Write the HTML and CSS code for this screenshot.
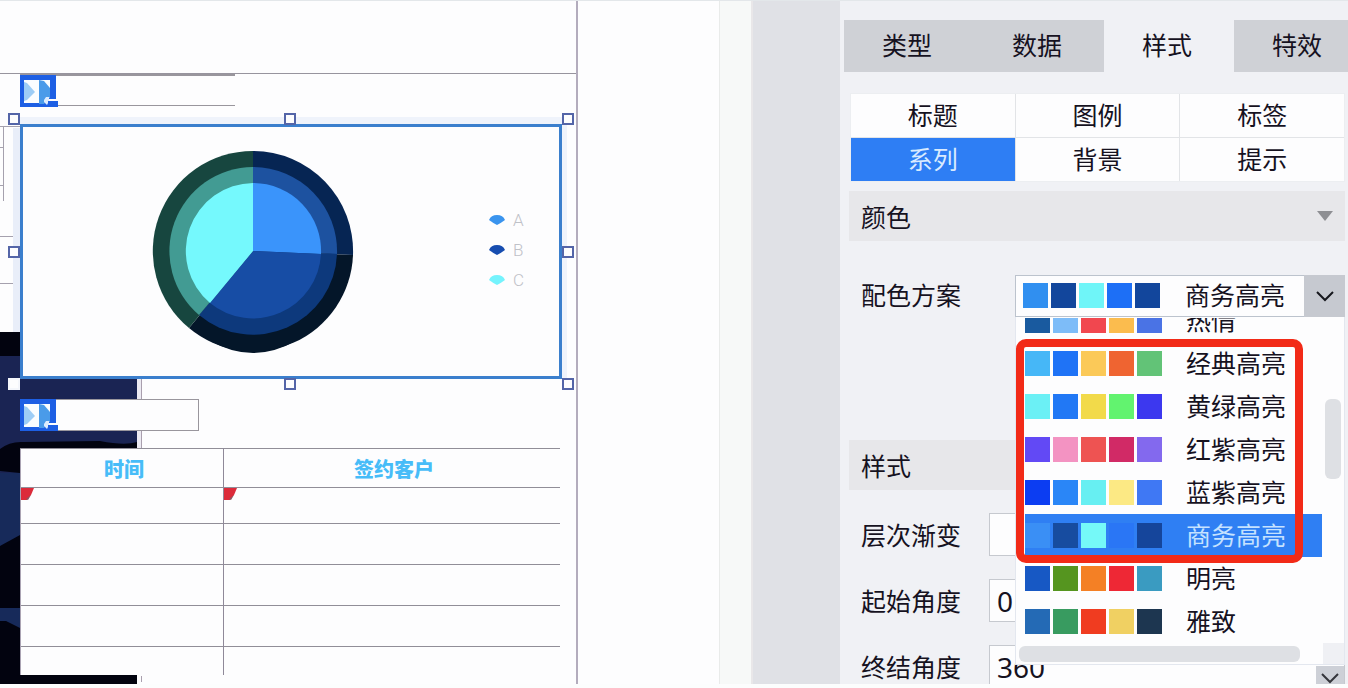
FILE: index.html
```html
<!DOCTYPE html>
<html lang="zh-CN">
<head>
    <meta charset="UTF-8">
    <meta name="viewport" content="width=device-width, initial-scale=1.0">
    <title>图表样式</title>
    <link rel="stylesheet" href="styles.css">
</head>
<body>
    <div class="designer">
        <div class="sheet">
            <!-- page backdrop and grid lines -->
            <svg class="backdrop" width="146" height="684" viewBox="0 0 146 684" aria-hidden="true">
                <g fill="none" stroke="#a5a1ae">
                    <path d="M0 126.500H20M0 147.500H3M0 185.500H3M0 236.500H20M0 283.500H20"/>
                    <path d="M3.500 126V201"/>
                </g>
                <path fill="#e9eef9" d="M13 128H20V332H13Z"/>
                <path fill="#1a2453" d="M0 332H137V684H0Z"/>
                <path fill="#02030f" d="M0 332H20V356H0Z"/>
                <path fill="#02030f" d="M0 449Q10 441 24 442L100 441Q125 446 137 442V460H20V473L0 471Z"/>
                <path fill="#172a5a" d="M0 473H20V536L0 546Z"/>
                <path fill="#02030f" d="M0 546L20 535V608H0Z"/>
                <path fill="#172a5a" d="M0 608H20V628L6 621H0Z"/>
                <path fill="#02030f" d="M0 621H6L20 628V674H137V684H0Z"/>
                <path fill="#eceaf2" d="M137 378H141V449H137Z"/>
                <path fill="none" stroke="#a99fae" d="M141.500 378V449M141.500 676V682"/>
            </svg>

            <div class="title-strip title-top">
                <svg class="title-icon" width="38" height="32" viewBox="0 0 38 32" aria-hidden="true">
                    <path fill="#1d5fe4" d="M0 0H36V24H28V32H0Z"/>
                    <path fill="#fafdff" d="M4 5H30V22L24 28H4Z"/>
                    <path fill="#9dcdf6" d="M4 7L7 8L15 17L7 25L4 26Z"/>
                    <path fill="#4a9be9" d="M19 5L24 6L30 13V22L24 29H19Z"/>
                    <path fill="#dcebfd" d="M24 25L26 22H29V26L27 30L24 27Z"/>
                    <path fill="#1d5fe4" d="M28 26H38V32H28Z"/>
                </svg>
            </div>

            <div class="chart">
                <svg class="pie" width="202" height="204" viewBox="-101 -101 202 204" role="img" aria-label="A B C">
                    <path fill="#041629" d="M-44 89Q0 115 44 89Z"/>
                    <path fill="#062553" d="M0 0V-100A100 100 0 0 1 100 4Z"/>
                    <path fill="#041629" d="M0 0L100 4A100 100 0 0 1 -64 77Z"/>
                    <path fill="#17463f" d="M0 0L-64 77A100 100 0 0 1 0 -100Z"/>
                    <path fill="#1d52a0" d="M0 0V-84A84 84 0 0 1 84 3Z"/>
                    <path fill="#0d397c" d="M0 0L84 3A84 84 0 0 1 -54 64Z"/>
                    <path fill="#429b93" d="M0 0L-54 64A84 84 0 0 1 0 -84Z"/>
                    <path fill="#3a94fb" d="M0 0V-68A68 68 0 0 1 68 3Z"/>
                    <path fill="#174da5" d="M0 0L68 3A68 68 0 0 1 -43 52Z"/>
                    <path fill="#75f9fd" d="M0 0L-43 52A68 68 0 0 1 0 -68Z"/>
                </svg>
                <ul class="legend">
                    <li>
                        <svg width="16" height="10" viewBox="0 0 16 10"><path fill="#3a94ee" d="M0 5Q2 0 8 0Q14 0 16 5Q12 8 8 10Q4 8 0 5Z"/></svg>
                        A
                    </li>
                    <li>
                        <svg width="16" height="10" viewBox="0 0 16 10"><path fill="#174db0" d="M0 5Q2 0 8 0Q14 0 16 5Q12 8 8 10Q4 8 0 5Z"/></svg>
                        B
                    </li>
                    <li>
                        <svg width="16" height="10" viewBox="0 0 16 10"><path fill="#75f3fd" d="M0 5Q2 0 8 0Q14 0 16 5Q12 8 8 10Q4 8 0 5Z"/></svg>
                        C
                    </li>
                </ul>
                <!-- resize handles -->
                <span class="handle top left"></span>
                <span class="handle top center"></span>
                <span class="handle top right"></span>
                <span class="handle middle left"></span>
                <span class="handle middle right"></span>
                <span class="handle bottom left plain"></span>
                <span class="handle bottom center"></span>
                <span class="handle bottom right"></span>
            </div>

            <div class="title-strip title-table">
                <svg class="title-icon" width="38" height="32" viewBox="0 0 38 32" aria-hidden="true">
                    <path fill="#1d5fe4" d="M0 0H36V24H28V32H0Z"/>
                    <path fill="#fafdff" d="M4 5H30V22L24 28H4Z"/>
                    <path fill="#9dcdf6" d="M4 7L7 8L15 17L7 25L4 26Z"/>
                    <path fill="#4a9be9" d="M19 5L24 6L30 13V22L24 29H19Z"/>
                    <path fill="#dcebfd" d="M24 25L26 22H29V26L27 30L24 27Z"/>
                    <path fill="#1d5fe4" d="M28 26H38V32H28Z"/>
                </svg>
            </div>

            <table class="grid">
                <thead>
                    <tr><th class="col-time">时间</th><th>签约客户</th></tr>
                </thead>
                <tbody>
                    <tr class="first">
                        <td><svg width="14" height="13" viewBox="0 0 14 13"><path fill="#dc2b3a" d="M0 0H13L10 7L6 12H0Z"/><path fill="#8b5560" d="M10 7L7 12L5 11Z"/></svg></td>
                        <td><svg width="14" height="13" viewBox="0 0 14 13"><path fill="#dc2b3a" d="M0 0H13L10 7L6 12H0Z"/><path fill="#8b5560" d="M10 7L7 12L5 11Z"/></svg></td>
                    </tr>
                    <tr><td></td><td></td></tr>
                    <tr><td></td><td></td></tr>
                    <tr><td></td><td></td></tr>
                    <tr class="last"><td></td><td></td></tr>
                </tbody>
            </table>
        </div>
        <div class="ruler"></div>
    </div>

    <div class="gutter"></div>

    <div class="panel">
        <div class="tabs">
            <button>类型</button>
            <button>数据</button>
            <button class="active">样式</button>
            <button>特效</button>
        </div>

        <div class="sub-tabs">
            <button>标题</button>
            <button>图例</button>
            <button>标签</button>
            <button class="active">系列</button>
            <button>背景</button>
            <button>提示</button>
        </div>

        <button class="section">
            颜色
            <svg width="16" height="10" viewBox="0 0 16 10"><path fill="#8e8f93" d="M0 0H16L8 10Z"/></svg>
        </button>

        <div class="field scheme-field">
            <label for="scheme">配色方案</label>
            <div class="combo">
                <select id="scheme">
                    <option>商务高亮</option>
                </select>
                <span class="swatches current"><i class="light-blue"></i><i class="navy"></i><i class="cyan"></i><i class="blue"></i><i class="navy"></i></span>
                <span class="arrow">
                    <svg width="18" height="11" viewBox="0 0 18 11"><path fill="none" stroke="#16171d" stroke-width="2" d="M1 1L9 9L17 1"/></svg>
                </span>

                <div class="popup">
                    <ul class="options" id="options" role="listbox" aria-label="配色方案"></ul>
                    <div class="scroll-y"></div>
                    <div class="scroll-row"><div class="scroll-x"></div><div class="corner"></div></div>
                    <div class="highlight-box"></div>
                </div>
            </div>
        </div>

        <button class="section">样式</button>

        <div class="field">
            <label for="gradient">层次渐变</label>
            <input type="text" id="gradient">
        </div>
        <div class="field">
            <label for="start-angle">起始角度</label>
            <input type="text" id="start-angle" value="0">
        </div>
        <div class="field">
            <label for="end-angle">终结角度</label>
            <input type="text" id="end-angle" value="360">
        </div>
        <button class="scroll-down" aria-label="向下">
            <svg width="18" height="11" viewBox="0 0 18 11"><path fill="none" stroke="#34353b" stroke-width="2" d="M1 1L9 9L17 1"/></svg>
        </button>
    </div>

    <script>
        const schemes = [
            { name: '热情', colors: ['#195a9f', '#7dbcf8', '#f1474f', '#fbbc4e', '#4a73e5'] },
            { name: '经典高亮', colors: ['#46b7f7', '#1f73f6', '#fbc958', '#ef6431', '#62c377'] },
            { name: '黄绿高亮', colors: ['#6bf0f5', '#2178f5', '#f2da4a', '#62f36f', '#3c38ef'] },
            { name: '红紫高亮', colors: ['#6249f5', '#f393c2', '#ee5352', '#d12a66', '#8369ee'] },
            { name: '蓝紫高亮', colors: ['#0c3df2', '#2a86f7', '#67eff2', '#fce984', '#3f78f4'] },
            { name: '商务高亮', colors: ['#3a8ff5', '#174ca0', '#75f9f8', '#2a76f5', '#15459b'], selected: true },
            { name: '明亮', colors: ['#1758c4', '#55951f', '#f48025', '#ee2835', '#3a9bc1'] },
            { name: '雅致', colors: ['#246ab5', '#389b60', '#f03c20', '#f0d062', '#1d3650'] }
        ];

        const list = document.getElementById('options');

        schemes.forEach(scheme => {
            const item = document.createElement('li');
            item.setAttribute('role', 'option');
            item.setAttribute('aria-selected', scheme.selected ? 'true' : 'false');
            if (scheme.selected) {
                item.className = 'selected';
            }

            const swatches = document.createElement('span');
            swatches.className = 'swatches';
            scheme.colors.forEach(color => {
                const swatch = document.createElement('i');
                swatch.style.backgroundColor = color;
                swatches.appendChild(swatch);
            });

            const name = document.createElement('span');
            name.className = 'name';
            name.textContent = scheme.name;

            item.appendChild(swatches);
            item.appendChild(name);
            list.appendChild(item);
        });
    </script>
</body>
</html>
```

FILE: styles.css
```css
* {
    box-sizing: border-box;
}
body {
    font-family: "Noto Sans", "Noto Sans CJK SC", sans-serif;
    font-size: 25px;
    color: #16121f;
    margin: 0;
    height: 100vh;
    display: flex;
    overflow: hidden;
    background-color: #fdfdfe;
    border-top: 1px solid #e3e7ea;
    border-bottom: 4px solid #fcfdfd;
}
button,
input,
select {
    font: inherit;
    color: inherit;
    border: none;
    margin: 0;
    padding: 0;
}
button {
    cursor: pointer;
}
ul {
    list-style: none;
    margin: 0;
    padding: 0;
}
svg {
    display: block;
}

/* designer canvas */
.designer {
    flex: 1;
    min-width: 0;
    display: flex;
    justify-content: space-between;
    overflow: hidden;
}
.sheet {
    position: relative;
    width: 578px;
    padding: 72px 0 0 20px;
    border-right: 2px solid #b3acbd;
}
.sheet::before {
    content: "";
    display: block;
    height: 1px;
    margin-left: -20px;
    background-color: #97949e;
}
.backdrop {
    position: absolute;
    left: 0;
    top: -1px;
}
.title-strip {
    position: relative;
    height: 32px;
    background-color: #fdfdfe;
    border: 1px solid #99969d;
}
.title-icon {
    margin: -1px;
}
.title-top {
    width: 215px;
    border-top-width: 2px;
    border-right: none;
}
.title-table {
    width: 179px;
    margin-top: 20px;
}
.chart {
    position: relative;
    display: flex;
    justify-content: space-between;
    width: 542px;
    height: 255px;
    margin-top: 18px;
    padding: 23px 35px 0 129px;
    background-color: #fdfdfe;
    border: 3px solid #3b7fcd;
    box-shadow: 0 -7px 0 #eff3fb, 5px 0 0 #eff3fb;
}
.legend {
    padding-top: 55px;
    font-family: Roboto, sans-serif;
    font-size: 17px;
    font-weight: 300;
    color: #bfc1c8;
}
.legend li {
    display: flex;
    align-items: center;
    gap: 8px;
    height: 30px;
}
.handle {
    position: absolute;
    width: 12px;
    height: 12px;
    background-color: #fdfdfe;
    border: 2px solid #5465a8;
}
.handle.plain {
    border-color: #f4f6fb;
}
.handle.top {
    top: -14px;
}
.handle.middle {
    top: calc(50% - 6px);
}
.handle.bottom {
    bottom: -14px;
}
.handle.left {
    left: -15px;
}
.handle.center {
    left: calc(50% - 7px);
}
.handle.right {
    right: -15px;
}
.grid {
    position: relative;
    width: 540px;
    margin-top: 17px;
    border-collapse: collapse;
    table-layout: fixed;
    background-color: #fdfdfe;
}
.grid th {
    height: 39px;
    padding: 4px 0 0 4px;
    font-size: 20px;
    line-height: 24px;
    font-weight: 900;
    color: #47bcf8;
    border-top: 1px solid #918e98;
}
.grid .col-time {
    width: 203px;
}
.grid th:first-child,
.grid td:first-child {
    border-left: 1px solid #aaa3b3;
    border-right: 1px solid #8f8999;
}
.grid td {
    height: 41px;
    padding: 0;
    vertical-align: top;
    border-top: 1px solid #918e98;
}
.grid .first td {
    height: 36px;
}
.grid .last td {
    height: 28px;
}
.ruler {
    width: 34px;
    background-color: #f7f9f8;
    border-left: 1px solid #e9ebea;
    border-right: 2px solid #e9e7e9;
}
.gutter {
    width: 87px;
    background-color: #e0e1e6;
}

/* property panel */
.panel {
    position: relative;
    width: 508px;
    overflow: hidden;
    padding: 19px 3px 0 9px;
    background-color: #f0f1f5;
}
.tabs {
    display: grid;
    grid-template-columns: repeat(4, 130px);
    margin: 0 -3px 0 -5px;
    overflow: hidden;
}
.tabs button {
    height: 52px;
    padding: 0 4px 5px 0;
    background-color: #cfd1d6;
}
.tabs .active {
    background-color: #f0f1f5;
}
.sub-tabs {
    display: grid;
    grid-template-columns: repeat(3, 1fr);
    gap: 1px;
    margin: 21px 0 9px 1px;
    border: 1px solid #eceef1;
    background-color: #e2e4e7;
}
.sub-tabs button {
    height: 43px;
    padding-bottom: 4px;
    background-color: #fdfdfe;
}
.sub-tabs .active {
    background-color: #2e7ef4;
    color: #d9ebff;
}
.section {
    display: flex;
    align-items: center;
    justify-content: space-between;
    width: 100%;
    height: 50px;
    padding: 0 12px;
    background-color: #e7e7ea;
}
.field {
    display: flex;
    align-items: center;
    height: 43px;
    margin-top: 23px;
    padding-left: 12px;
}
.field label {
    width: 128px;
    line-height: 40px;
}
.field input {
    flex: 1;
    min-width: 0;
    height: 43px;
    padding: 0 7px;
    font-size: 28px;
    background-color: #fdfdfe;
    border: 1px solid #c6c9cf;
}
.scheme-field {
    height: 42px;
    margin: 34px 0 123px;
}
.scheme-field label {
    width: 154px;
    padding-bottom: 3px;
}
.combo {
    position: relative;
    flex: 1;
    height: 42px;
}
.combo select {
    appearance: none;
    width: 100%;
    height: 100%;
    padding: 0 0 3px 169px;
    background-color: #fdfdfe;
    border: 1px solid #bcc3cd;
    border-radius: 0;
}
.swatches {
    display: flex;
    gap: 3px;
}
.swatches i {
    width: 25px;
    height: 25px;
}
.current {
    position: absolute;
    left: 8px;
    top: 8px;
    pointer-events: none;
}
.light-blue {
    background-color: #308ff0;
}
.navy {
    background-color: #12469c;
}
.cyan {
    background-color: #6ff5f8;
}
.blue {
    background-color: #1d6ff6;
}
.arrow {
    position: absolute;
    top: 0;
    right: 0;
    bottom: 0;
    width: 41px;
    display: grid;
    place-items: center;
    background-color: #c6c9d0;
    pointer-events: none;
}
.popup {
    position: absolute;
    z-index: 1;
    top: 100%;
    left: 0;
    right: 0;
    background-color: #fdfdfe;
    border: 1px solid #e3e7ef;
    border-top: none;
}
.options {
    display: flex;
    flex-direction: column;
    justify-content: flex-end;
    height: 325px;
    margin: 1px 22px 0 9px;
    overflow: hidden;
}
.options li {
    flex: none;
    display: flex;
    align-items: center;
    gap: 24px;
    height: 43px;
}
.options .name {
    padding-bottom: 4px;
}
.options .selected {
    background-color: #2f7ff3;
    color: #c5e2ff;
}
.scroll-y {
    position: absolute;
    top: 82px;
    right: 3px;
    width: 16px;
    height: 80px;
    border-radius: 6px;
    background-color: #dee0e4;
}
.scroll-row {
    display: flex;
    justify-content: space-between;
    height: 21px;
}
.scroll-x {
    width: 281px;
    height: 16px;
    margin: 3px;
    border-radius: 6px;
    background-color: #dee0e4;
}
.corner {
    width: 21px;
    background-color: #eff0f4;
}
.highlight-box {
    position: absolute;
    top: 22px;
    left: 0;
    width: 287px;
    height: 224px;
    border: 8px solid #f22a17;
    border-radius: 10px;
}
.scroll-down {
    position: absolute;
    right: 4px;
    bottom: 0;
    width: 28px;
    height: 18px;
    padding: 7px 5px 0;
    background-color: #cdd0d7;
    overflow: hidden;
}
```
